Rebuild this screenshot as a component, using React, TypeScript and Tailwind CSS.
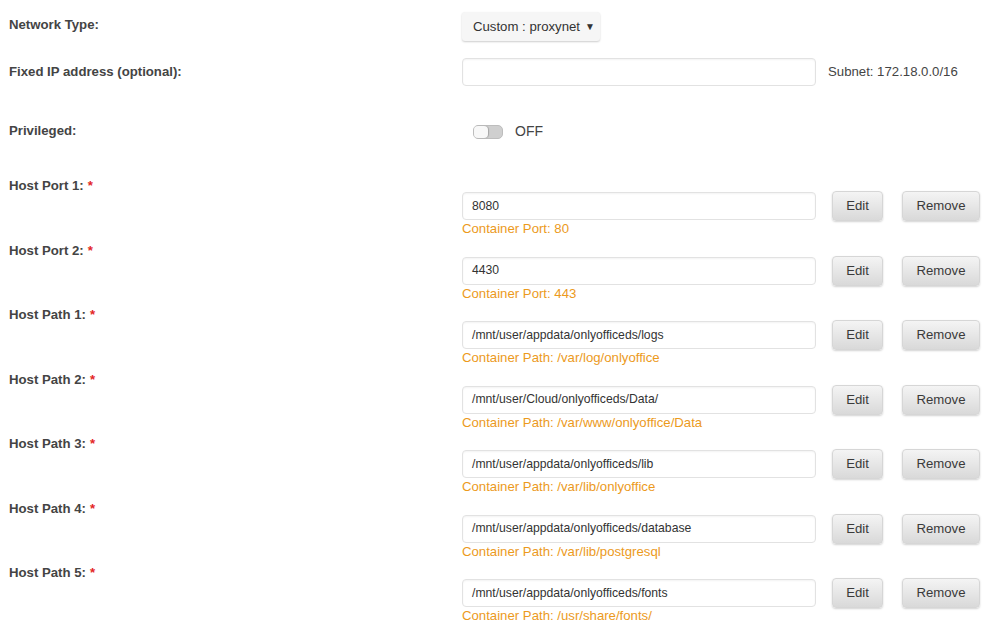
import * as React from 'react'

const hostRows = [
  { label: 'Host Port 1:', value: '8080', note: 'Container Port: 80' },
  { label: 'Host Port 2:', value: '4430', note: 'Container Port: 443' },
  { label: 'Host Path 1:', value: '/mnt/user/appdata/onlyofficeds/logs', note: 'Container Path: /var/log/onlyoffice' },
  { label: 'Host Path 2:', value: '/mnt/user/Cloud/onlyofficeds/Data/', note: 'Container Path: /var/www/onlyoffice/Data' },
  { label: 'Host Path 3:', value: '/mnt/user/appdata/onlyofficeds/lib', note: 'Container Path: /var/lib/onlyoffice' },
  { label: 'Host Path 4:', value: '/mnt/user/appdata/onlyofficeds/database', note: 'Container Path: /var/lib/postgresql' },
  { label: 'Host Path 5:', value: '/mnt/user/appdata/onlyofficeds/fonts', note: 'Container Path: /usr/share/fonts/' },
]

function Label({ children, required }: { children: React.ReactNode; required?: boolean }) {
  return (
    <div className="w-[453px] shrink-0 text-[13.2px] leading-[16px] font-bold text-[#444]">
      {children}
      {required && <span className="ml-[4px] text-[#e32626]">*</span>}
    </div>
  )
}

function TextBox({ value }: { value?: string }) {
  return (
    <div className="flex h-[28px] w-[354px] items-center rounded-[4px] border border-[#e2e2e2] bg-white px-[9px] text-[12.2px] text-[#333] shadow-[inset_0_1px_2px_rgba(0,0,0,0.05)]">
      {value}
    </div>
  )
}

function GrayButton({ children, width }: { children: React.ReactNode; width: string }) {
  return (
    <button
      className={
        'flex h-[30px] items-center justify-center rounded-[4px] border border-[#d6d6d6] bg-gradient-to-b from-[#f4f4f4] to-[#d9d9d9] text-[13.2px] text-[#3a3a3a] shadow-[0_1px_2px_rgba(0,0,0,0.18)] ' +
        width
      }
    >
      {children}
    </button>
  )
}

export default function App() {
  return (
    <div
      className="h-[644px] w-[1000px] overflow-hidden bg-white pl-[9px]"
      style={{ fontFamily: '"Liberation Sans", Arial, sans-serif' }}
    >
      {/* Network type */}
      <div className="flex h-[50px] items-center">
        <Label>Network Type:</Label>
        <div className="mt-[3px] flex h-[29px] w-[138px] items-center justify-between rounded-[3px] bg-[#f6f6f6] pl-[11px] pr-[5px] text-[13.2px] text-[#333] shadow-[0_1px_2px_rgba(0,0,0,0.2)]">
          <span>Custom : proxynet</span>
          <span className="text-[10px]">▼</span>
        </div>
      </div>

      {/* Fixed IP */}
      <div className="flex h-[44px] items-center">
        <Label>Fixed IP address (optional):</Label>
        <TextBox />
        <span className="ml-[12px] text-[13.2px] text-[#444]">Subnet: 172.18.0.0/16</span>
      </div>

      {/* Privileged */}
      <div className="flex h-[74px] items-center">
        <Label>Privileged:</Label>
        <div className="ml-[11px] mt-[1px] flex items-center">
          <div className="relative h-[14px] w-[30px] rounded-[5px] border border-[#bdbdbd] bg-[#cfcfcf]">
            <div className="absolute left-0 top-0 h-[12px] w-[14px] rounded-[4px] bg-[#f8f8f8] shadow-[1px_0_1px_rgba(0,0,0,0.2)]" />
          </div>
          <span className="ml-[12px] text-[14px] text-[#444]">OFF</span>
        </div>
      </div>

      <div className="h-[10px]" />

      {hostRows.map((row) => (
        <div key={row.label} className="flex h-[64.5px]">
          <Label required>{row.label}</Label>
          <div className="pt-[13px]">
            <div className="flex items-center">
              <TextBox value={row.value} />
              <div className="ml-[16px]">
                <GrayButton width="w-[51px]">Edit</GrayButton>
              </div>
              <div className="ml-[19px]">
                <GrayButton width="w-[78px]">Remove</GrayButton>
              </div>
            </div>
            <div className="text-[13.2px] leading-[16px] text-[#ec9a1c]">{row.note}</div>
          </div>
        </div>
      ))}
    </div>
  )
}
